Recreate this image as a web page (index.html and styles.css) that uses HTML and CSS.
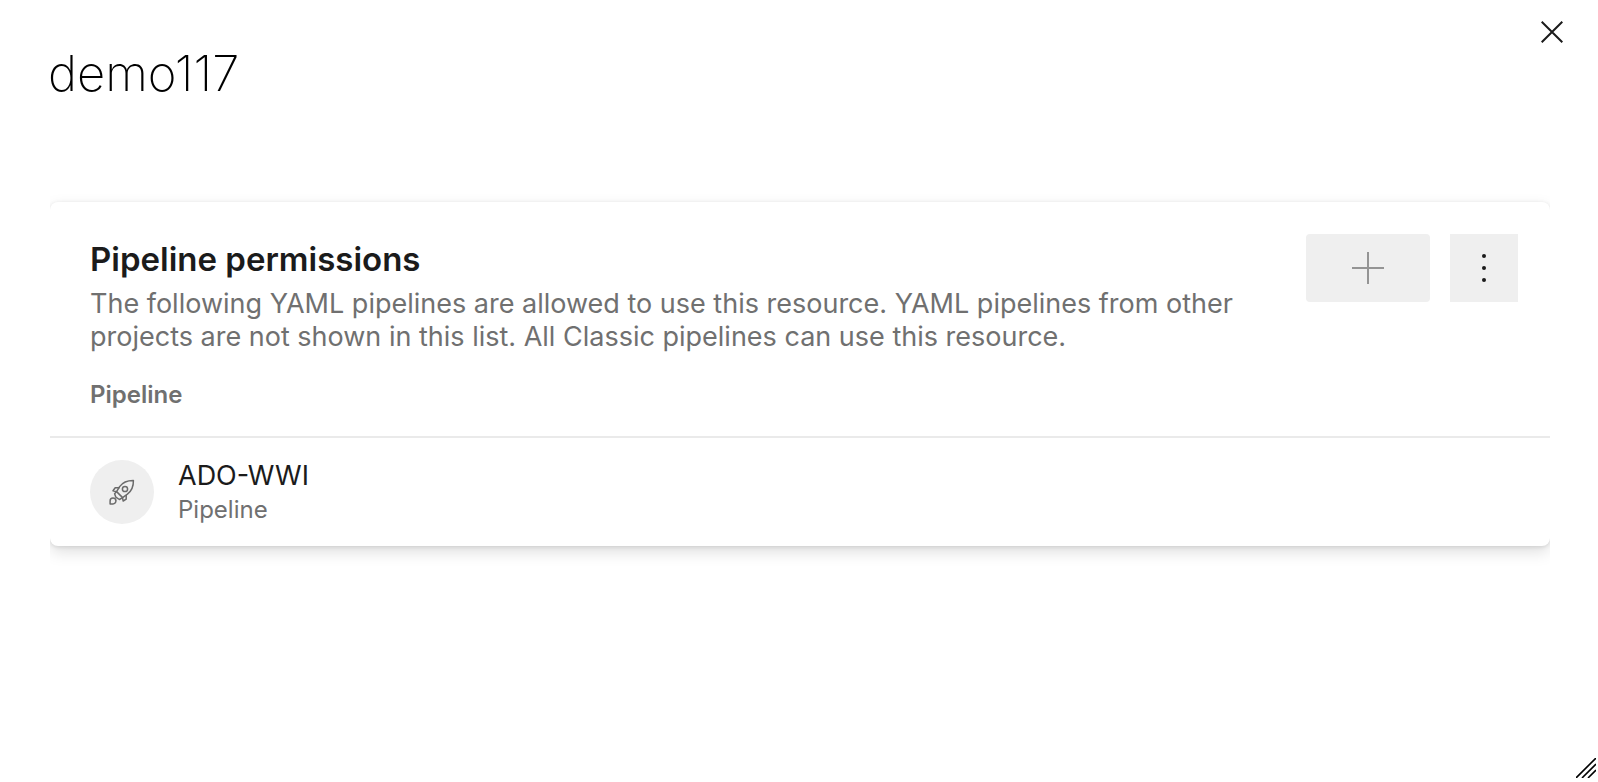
FILE: index.html
```html
<!DOCTYPE html>
<html lang="en">
<head>
<meta charset="utf-8">
<meta name="viewport" content="width=device-width, initial-scale=1">
<title>demo117</title>
<link rel="stylesheet" href="styles.css">
</head>
<body>
<main class="dialog">
  <header class="dialog-header">
    <h1 class="dialog-title">demo117</h1>
    <button class="close" type="button" aria-label="Close">
      <svg width="22" height="22" viewBox="0 0 22 22" fill="none" stroke="#1b1b1b" stroke-width="2"><path d="M.7.7l20.6 20.6M21.3.7L.7 21.3"/></svg>
    </button>
  </header>
  <div class="content">
    <section class="card">
      <div class="card-header">
        <div class="card-text">
          <h2 class="card-title">Pipeline permissions</h2>
          <p class="card-description">The following YAML pipelines are allowed to use this resource. YAML pipelines from other projects are not shown in this list. All Classic pipelines can use this resource.</p>
        </div>
        <div class="actions">
          <button class="action add" type="button" aria-label="Add pipeline">
            <svg width="32" height="32" viewBox="0 0 32 32" stroke="#949494" stroke-width="2"><path d="M16 0v32M0 16h32"/></svg>
          </button>
          <button class="action more" type="button" aria-label="More options">
            <svg width="4" height="28" viewBox="0 0 4 28" fill="#1b1b1b"><circle cx="2" cy="2" r="2"/><circle cx="2" cy="14" r="2"/><circle cx="2" cy="26" r="2"/></svg>
          </button>
        </div>
      </div>
      <table class="pipelines">
        <thead><tr><th class="column-name" scope="col">Pipeline</th></tr></thead>
        <tbody>
          <tr><td class="cell">
            <div class="pipeline">
              <span class="avatar">
                <svg width="26" height="26" viewBox="0 0 26 26" fill="none" stroke="#6b6b6b" stroke-width="1.5" stroke-linejoin="round">
                  <path d="M24.4 1.5C17.8 1.4 13.4 3.8 10.6 7.6L7.6 12.6l6 6 4.8-3.4C22.2 12.2 24.6 7.6 24.4 1.5z"/>
                  <circle cx="16" cy="10" r="2.6"/>
                  <path d="M10.6 8.8H6.2L4 11.8l3.8 1M17.2 16v4.2L14.2 22l-.8-3.4"/>
                  <path d="M7.6 12.6l-2 2.1 1.2 3.4 3.6 2.4 3.2-1.9"/>
                  <path d="M1.1 24.9v-3a2.9 2.9 0 0 1 5.8 0a2.9 2.9 0 0 1-2.9 3z"/>
                </svg>
              </span>
              <span class="pipeline-text">
                <span class="pipeline-name">ADO-WWI</span>
                <span class="pipeline-kind">Pipeline</span>
              </span>
            </div>
          </td></tr>
        </tbody>
      </table>
    </section>
  </div>
  <svg class="grip" width="20" height="20" viewBox="0 0 20 20" stroke="#000" stroke-width="1.6" aria-hidden="true"><path d="M0 20L20 0M6 20L20 6M12 20l8-8"/></svg>
</main>
</body>
</html>
```
FILE: styles.css
```css
* {
  box-sizing: border-box;
}

body {
  margin: 0;
  background: #fff;
  color: #1b1b1b;
  font-family: Inter, "Liberation Sans", sans-serif;
}

button {
  display: flex;
  align-items: center;
  justify-content: center;
  padding: 0;
  border: 0;
  background: none;
}

.dialog {
  position: relative;
  min-height: 100vh;
}

.dialog-header {
  display: flex;
  align-items: flex-start;
  justify-content: space-between;
  padding: 12px 26px 0 48px;
}

.dialog-title {
  margin: 0;
  padding-top: 32px;
  color: #000;
  font-size: 49px;
  font-weight: 200;
  line-height: 60px;
}

.close {
  width: 40px;
  height: 40px;
}

/* Clips the card shadow at the left and right edges. */
.content {
  overflow: hidden;
  margin: 58px 48px 0 50px;
  padding: 40px 0 48px;
}

.card {
  border-radius: 8px;
  background: #fff;
  box-shadow: 0 6px 16px rgba(0, 0, 0, 0.13), 0 1px 4px rgba(0, 0, 0, 0.11);
}

.card-header {
  display: flex;
  gap: 64px;
  padding: 32px 32px 0 40px;
}

.card-text {
  flex: 1;
}

.card-title {
  margin: 0 0 3px;
  font-size: 33px;
  font-weight: 600;
  line-height: 50px;
}

.card-description {
  margin: 0;
  color: #707070;
  font-size: 27px;
  line-height: 33px;
}

.actions {
  display: flex;
  gap: 20px;
}

.action {
  height: 68px;
  background: #efefef;
}

.add {
  width: 124px;
  border-radius: 4px;
}

.more {
  width: 68px;
}

.pipelines {
  width: 100%;
  margin-top: 26px;
  border-collapse: collapse;
}

.column-name {
  padding: 0 40px 25px;
  border-bottom: 2px solid #eaeaea;
  color: #707070;
  font-size: 24px;
  font-weight: 600;
  line-height: 32px;
  text-align: left;
}

.cell {
  padding: 20px 40px;
}

.pipeline {
  display: flex;
  align-items: center;
  gap: 24px;
}

.avatar {
  display: flex;
  align-items: center;
  justify-content: center;
  width: 64px;
  height: 64px;
  border-radius: 50%;
  background: #efefef;
}

.pipeline-text {
  display: flex;
  flex-direction: column;
}

.pipeline-name {
  font-size: 27px;
  line-height: 36px;
}

.pipeline-kind {
  color: #707070;
  font-size: 24px;
  line-height: 32px;
}

.grip {
  position: absolute;
  right: 2px;
  bottom: 4px;
}
```
